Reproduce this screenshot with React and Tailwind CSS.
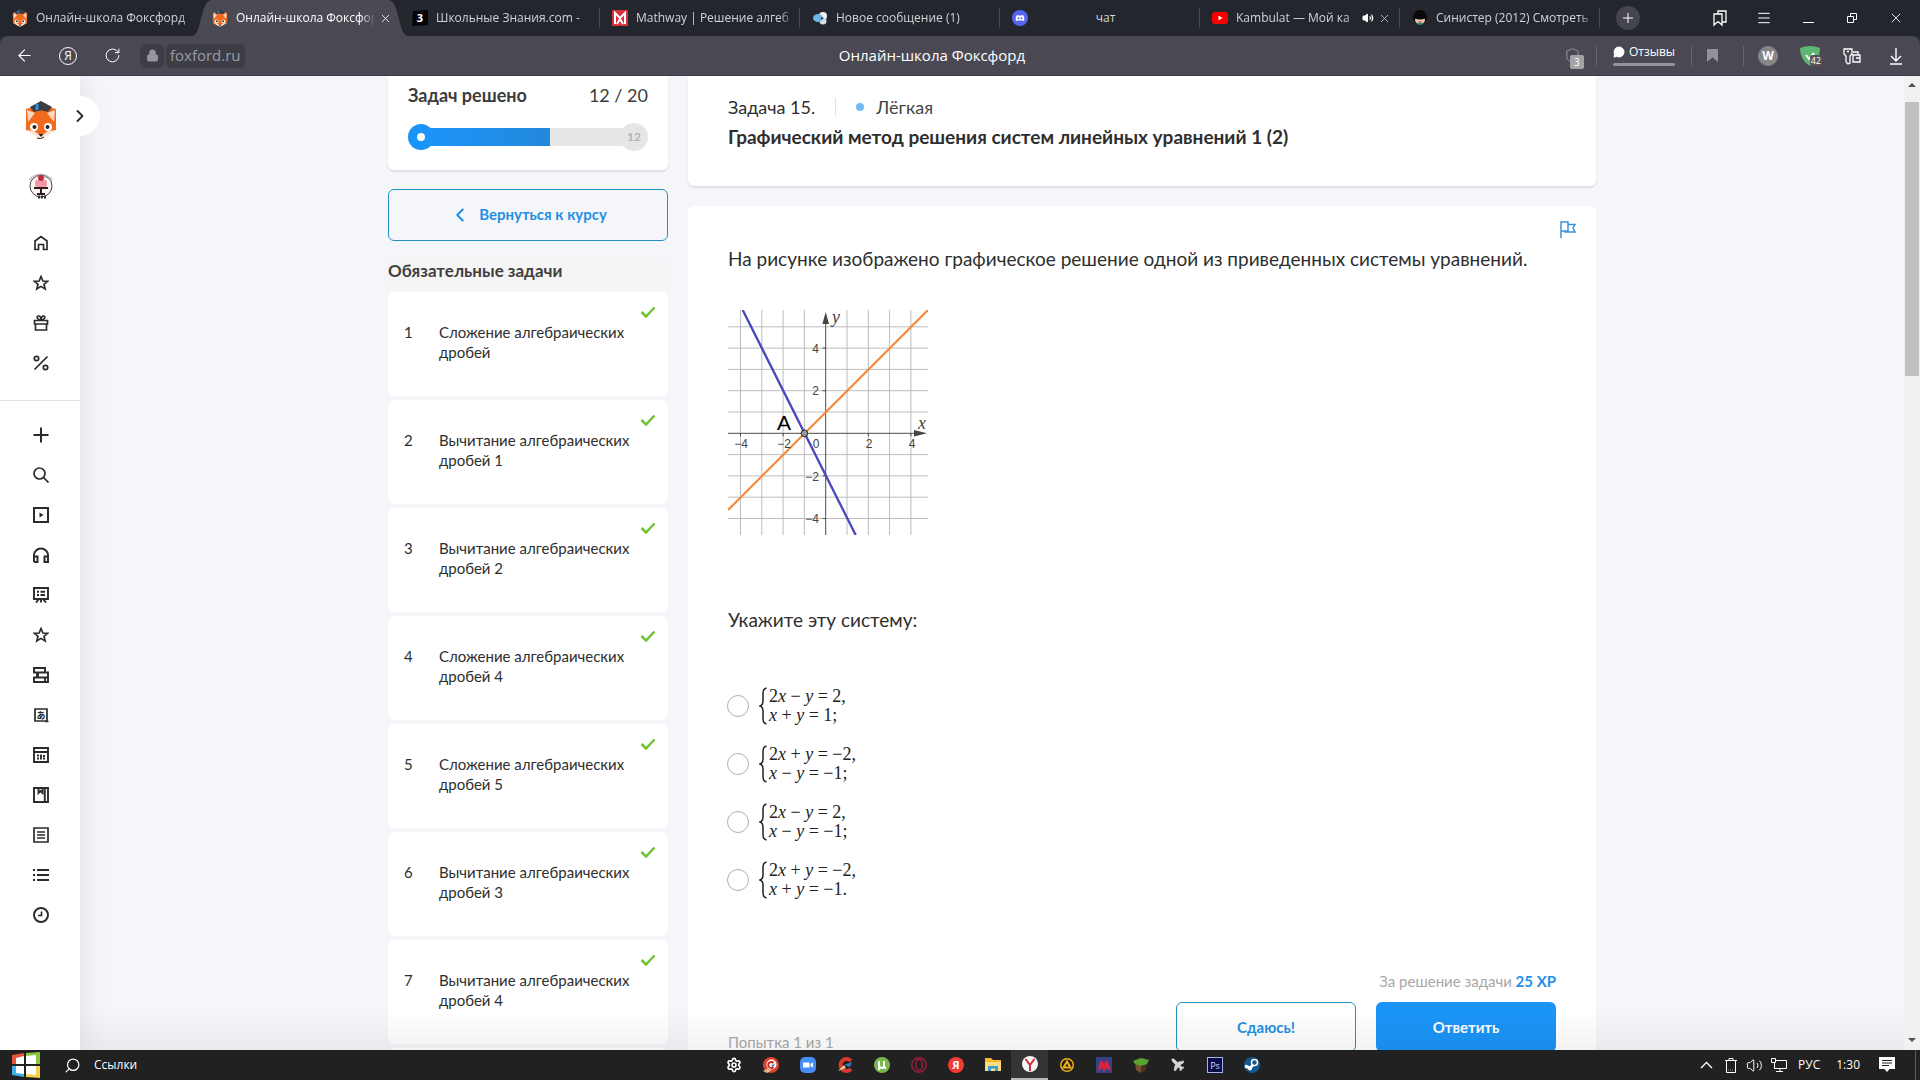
import React, { useState } from 'react';
import {
    ArrowLeft, RotateCw, Lock, X, Plus, Menu, Search, ChevronRight, ChevronLeft,
    ChevronUp, Volume2, Shield, MessageCircle, Settings, Plane
} from 'lucide-react';

const tasks = [
    'Сложение алгебраических дробей',
    'Вычитание алгебраических дробей 1',
    'Вычитание алгебраических дробей 2',
    'Сложение алгебраических дробей 4',
    'Сложение алгебраических дробей 5',
    'Вычитание алгебраических дробей 3',
    'Вычитание алгебраических дробей 4'
];

const answers = [
    [['2', 'x', ' − ', 'y', ' = 2,'], ['', 'x', ' + ', 'y', ' = 1;']],
    [['2', 'x', ' + ', 'y', ' = −2,'], ['', 'x', ' − ', 'y', ' = −1;']],
    [['2', 'x', ' − ', 'y', ' = 2,'], ['', 'x', ' − ', 'y', ' = −1;']],
    [['2', 'x', ' + ', 'y', ' = −2,'], ['', 'x', ' + ', 'y', ' = −1.']]
];

const Fox = ({ className }) => (
    <svg viewBox="0 0 32 38" className={className}>
        <path d="M1 8 L16 4 L31 8 V29 L16 37 L1 29 Z" fill="#f26a1e" />
        <path d="M2 9 L10 12 L3 21 Z M30 9 L22 12 L29 21 Z" fill="#fbd5bd" />
        <path d="M1 29 L9 30 L16 35 L23 30 L31 29 L16 38 Z" fill="#fbe6d8" />
        <path d="M5 6 L16 0 L27 6 L23 11 Q16 8 9 11 Z" fill="#3b3c44" />
        <path d="M12 3 V9" stroke="#2d8ee0" strokeWidth="3" />
        <circle cx="9" cy="26" r="4" fill="#fff" />
        <circle cx="23" cy="26" r="4" fill="#fff" />
        <circle cx="9.500" cy="26" r="2" fill="#28221f" />
        <circle cx="22.500" cy="26" r="2" fill="#28221f" />
        <path d="M13.500 33 H18.500 L16 36 Z" fill="#28221f" />
        <path d="M12 37 Q16 39 19 36" stroke="#28221f" fill="none" />
    </svg>
);

const Favicon = ({ kind }) => {
    if (kind === 'fox') return <Fox className="h-[18px] w-[18px] shrink-0" />;
    return (
        <svg viewBox="0 0 16 16" className="h-4 w-4 shrink-0">
            {kind === 'znania' && (
                <>
                    <path d="M1 1 L16 0 V15 L0 16 Z" fill="#050505" />
                    <text x="8" y="12" fontSize="11" fontWeight="700" textAnchor="middle" fill="#fff" fontFamily="Open Sans, sans-serif">3</text>
                </>
            )}
            {kind === 'mathway' && (
                <>
                    <rect width="16" height="16" fill="#d6303a" />
                    <path d="M3 14 V3 L8 8 L13 3 V14 M5 14 L8 9 L11 14" fill="none" stroke="#fff" strokeWidth="2" />
                </>
            )}
            {kind === 'message' && (
                <>
                    <circle cx="11" cy="6" r="4" fill="#f3f4f5" />
                    <circle cx="11" cy="11" r="3.500" fill="#d9dde0" />
                    <ellipse cx="6" cy="8" rx="5" ry="4" fill="#6eb4e4" />
                    <path d="M9 7 L12 8 L9 10 Z" fill="#2b4258" />
                </>
            )}
            {kind === 'discord' && (
                <>
                    <circle cx="8" cy="8" r="8" fill="#5865f2" />
                    <path d="M4 11 Q3 7 5 5 L7 5.500 H9 L11 5 Q13 7 12 11 L10 10.500 H6 Z" fill="#fff" />
                    <circle cx="6.500" cy="8.200" r="1" fill="#5865f2" />
                    <circle cx="9.500" cy="8.200" r="1" fill="#5865f2" />
                </>
            )}
            {kind === 'youtube' && (
                <>
                    <rect y="2" width="16" height="12" rx="3" fill="#f80000" />
                    <path d="M6.500 5.500 V10.500 L10.500 8 Z" fill="#fff" />
                </>
            )}
            {kind === 'film' && (
                <>
                    <circle cx="8" cy="7" r="7" fill="#0b0909" />
                    <ellipse cx="8" cy="10" rx="5" ry="4" fill="#ecc8b4" />
                    <path d="M2 8 Q8 11 14 8 L12 4 H4 Z" fill="#0b0909" />
                    <path d="M4 13 Q8 17 12 13 Z" fill="#2b8c7c" />
                    <path d="M6.500 12 H9.500" stroke="#b02222" />
                </>
            )}
        </svg>
    );
};

const Tab = ({ kind, title, active, closable, sound, center, divider }) => (
    <div className={`relative flex h-9 w-[200px] items-center pl-3 text-xs ${active ? 'text-white' : 'text-[#d2d2d6]'}`}>
        {active && (
            <svg viewBox="0 0 216 36" preserveAspectRatio="none" className="absolute top-0 -left-2 h-9 w-[216px]">
                <path d="M0 36 C10 36 8 0 20 0 H196 C208 0 206 36 216 36 Z" fill="#4b4a54" />
            </svg>
        )}
        <span className="relative mr-2 flex w-4 justify-center"><Favicon kind={kind} /></span>
        <span className={`relative mr-1 min-w-0 flex-1 overflow-hidden whitespace-nowrap ${center ? 'pr-5 text-center' : 'mask-r-from-90%'}`}>{title}</span>
        {sound && <Volume2 size={12} className="mr-1 shrink-0 fill-white text-white" />}
        {closable && (
            <button aria-label="Закрыть вкладку" className="relative mr-2 shrink-0"><X size={13} strokeWidth={1.5} /></button>
        )}
        {divider && <span className="h-5 w-px shrink-0 bg-[#484a52]" />}
    </div>
);

const BrowserTop = () => (
    <header className="shrink-0 bg-[#24262e] font-['Open_Sans','Noto_Sans',sans-serif] text-white">
        <div className="flex h-9 items-center">
            <Tab kind="fox" title="Онлайн-школа Фоксфорд" />
            <Tab kind="fox" title="Онлайн-школа Фоксфорд" active closable />
            <Tab kind="znania" title="Школьные Знания.com -" divider />
            <Tab kind="mathway" title="Mathway | Решение алгеб" divider />
            <Tab kind="message" title="Новое сообщение (1)" divider />
            <Tab kind="discord" title="чат" center divider />
            <Tab kind="youtube" title="Kambulat — Мой ка" sound closable divider />
            <Tab kind="film" title="Синистер (2012) Смотреть" divider />
            <button aria-label="Новая вкладка" className="ml-4 flex h-6 w-6 items-center justify-center rounded-full bg-[#44454e]">
                <Plus size={16} strokeWidth={1.5} />
            </button>
            <div className="ml-auto flex items-center pr-[2px]">
                <button aria-label="Закладки" className="flex w-11 justify-center">
                    <svg width="16" height="18" viewBox="0 0 16 18" fill="none" stroke="currentColor" strokeWidth="1.300">
                        <path d="M2 5 H10 V16 L6 12.500 L2 16 Z M6 5 V2 H14 V13 H10" />
                    </svg>
                </button>
                <button aria-label="Меню" className="flex w-11 justify-center"><Menu size={16} strokeWidth={1.5} /></button>
                <button aria-label="Свернуть" className="flex w-11 justify-center pt-2"><span className="h-px w-[11px] bg-white" /></button>
                <button aria-label="Окно" className="flex w-11 justify-center">
                    <svg width="12" height="12" viewBox="0 0 12 12" fill="none" stroke="currentColor">
                        <path d="M1.500 4.500 H7.500 V10.500 H1.500 Z M4.500 4.500 V1.500 H10.500 V7.500 H7.500" />
                    </svg>
                </button>
                <button aria-label="Закрыть" className="flex w-11 justify-center"><X size={16} strokeWidth={1.3} /></button>
            </div>
        </div>

        <div className="flex h-10 items-center rounded-t-lg border-b border-[#3c3b43] bg-[#4a4953]">
            <div className="flex flex-1 items-center pl-[2px]">
                <button aria-label="Назад" className="flex w-11 justify-center"><ArrowLeft size={19} strokeWidth={1.4} /></button>
                <button aria-label="Яндекс" className="flex w-11 justify-center">
                    <span className="flex h-[18px] w-[18px] items-center justify-center rounded-full border border-white text-xs leading-3">Я</span>
                </button>
                <button aria-label="Обновить" className="flex w-11 justify-center"><RotateCw size={17} strokeWidth={1.4} /></button>
                <span className="ml-[6px] flex h-6 w-6 items-center justify-center rounded-md bg-[#3d3d46]">
                    <Lock size={13} className="fill-[#96979e] text-[#96979e]" />
                </span>
                <span className="ml-[2px] flex h-6 items-center rounded-md bg-[#3d3d46] px-1 text-[15px] text-[#9c9ca3]">foxford.ru</span>
            </div>
            <h1 className="mr-[42px] text-[15px]">Онлайн-школа Фоксфорд</h1>
            <div className="flex flex-1 items-center justify-end pr-4">
                <span className="relative mr-3 flex w-5">
                    <Shield size={17} strokeWidth={1.3} className="text-[#a0a0a6]" />
                    <span className="absolute top-2 left-1.5 h-[14px] w-[14px] rounded-xs bg-[#a3a3a8] text-center text-[10px] leading-[14px]">3</span>
                </span>
                <span className="h-5 w-px bg-[#64646c]" />
                <button className="mx-4 flex flex-col gap-1 text-xs leading-[14px]">
                    <span className="flex items-center gap-1"><MessageCircle size={12} className="fill-white" />Отзывы</span>
                    <span className="h-[3px] w-full rounded bg-[#94949a]" />
                </button>
                <span className="h-5 w-px bg-[#64646c]" />
                <svg width="11" height="13" viewBox="0 0 11 13" className="mr-[25px] ml-[15px]"><path d="M0 0 H11 V13 L5.500 8.500 L0 13 Z" fill="#92929a" /></svg>
                <span className="mr-[14px] h-5 w-px bg-[#64646c]" />
                <span className="h-5 w-5 rounded-full bg-[#858588] text-center text-xs leading-5 font-bold">W</span>
                <span className="relative ml-[22px] h-5 w-[22px]">
                    <svg viewBox="0 0 20 20" className="h-5 w-5"><path d="M0 2 Q10 -2 20 2 Q20 14 10 20 Q0 14 0 2" fill="#5fb573" /><path d="M6 9 L9 13 L14 7" stroke="#fff" strokeWidth="2" fill="none" /></svg>
                    <span className="absolute right-0 bottom-0 rounded-xs bg-[#5b5157] px-px text-[9px] leading-[11px]">42</span>
                </span>
                <svg width="20" height="18" viewBox="0 0 20 18" fill="none" stroke="currentColor" strokeWidth="1.300" className="ml-5">
                    <path d="M2 2 H10 V7 L8 9 V16 L6 17 L4 15 V9 L2 7 Z M5 4.500 H7 M11 5 H16 V8 M11 8 H18 V15 H11 Z M14 11 H18" />
                </svg>
                <svg width="16" height="18" viewBox="0 0 16 18" fill="none" stroke="currentColor" strokeWidth="1.400" className="ml-[26px]">
                    <path d="M8 1 V14 M3 9 L8 14 L13 9 M2 17 H14" />
                </svg>
            </div>
        </div>
    </header>
);

const menuIcons = {
    home: <path d="M2 14.500 V6 L8 1.500 L14 6 V14.500 H10.500 V9.500 H5.500 V14.500 Z" />,
    star: <path d="M8 1.500 L9.900 6 L14.500 6.300 L11 9.300 L12.200 14 L8 11.400 L3.800 14 L5 9.300 L1.500 6.300 L6.100 6 Z" />,
    gift: <path d="M1.500 5.500 H14.500 V9 H1.500 Z M2.500 9 V15 H13.500 V9 M8 5 C4 5 3 1 5.500 1 C7 1 8 3 8 5 C8 3 9 1 10.500 1 C13 1 12 5 8 5" />,
    percent: <><path d="M1.500 14.500 L14.500 1.500" /><circle cx="3.500" cy="3.500" r="2.200" /><circle cx="12.500" cy="12.500" r="2.200" /></>,
    plus: <path d="M8 0.500 V15.500 M0.500 8 H15.500" strokeWidth="2" />,
    search: <><circle cx="6.500" cy="6.500" r="5.500" /><path d="M10.500 10.500 L15.500 15.500" /></>,
    video: <><rect x="1" y="1" width="14" height="14" strokeWidth="2" /><path d="M6.500 5.500 V10.500 L10.500 8 Z" fill="currentColor" stroke="none" /></>,
    headphones: <path d="M1 15 V8 A7 6.500 0 0 1 15 8 V15 H11.500 V9.500 H15 M1 15 H4.500 V9.500 H1" strokeWidth="2" />,
    board: <path d="M1 1 H15 V12 H1 Z M4 4.800 H6 M7.500 4.800 H12 M4 8 H6 M7.500 8 H12 M8 12 V15.500 M6 12 L3 15.500 M10 12 L13 15.500" strokeWidth="1.900" />,
    books: <path d="M1 1 H12 V5.500 H1 Z M4 5.500 H15 V10.500 H4 Z M1 10.500 H15 V15 H1 Z M5 5.500 V10 M12 11 V15" strokeWidth="1.900" />,
    lang: <><path d="M2 2 H14 V14 H2 Z M12 14.500 H15.500" /><text x="8" y="11.500" fontSize="9" fontWeight="700" textAnchor="middle" fill="currentColor" stroke="none" fontFamily="Noto Sans CJK JP, sans-serif">あ</text></>,
    calendar: <path d="M1 1 H15 V15 H1 Z M1 5 H15 M4 8.500 H6 M8 7.500 V12.500 M10 9 H12 M4 11.500 H6 M10 11.500 H12" strokeWidth="1.900" />,
    book: <path d="M1 1 H15 V15 H1 Z M11.800 1 V15 M5.500 1 V6 L7.500 4 L9.500 6 V1" strokeWidth="1.900" />,
    list: <path d="M1 1 H15 V15 H1 Z M4 5 H12 M4 8 H12 M4 11 H12" />,
    bullets: <path d="M0 3 H2 M4 3 H16 M0 8 H2 M4 8 H16 M0 13 H2 M4 13 H16" strokeWidth="2" />,
    clock: <><circle cx="8" cy="8" r="7" strokeWidth="2" /><path d="M8.500 4.500 V8.500 H5" /></>
};

const MenuLink = ({ name }) => (
    <a href="#" aria-label={name} className="flex h-10 w-full items-center justify-center pl-[2px]">
        <svg viewBox="0 0 16 16" width="16" height="16" fill="none" stroke="currentColor" strokeWidth="1.700">{menuIcons[name]}</svg>
    </a>
);

const Sidebar = () => (
    <nav className="relative z-10 w-20 shrink-0 bg-white text-[#2b2b2b] shadow-[4px_0_24px_rgba(60,70,90,0.10)]">
        <button aria-label="Развернуть меню" className="absolute top-5 left-[60px] flex h-10 w-10 items-center justify-center rounded-full bg-white">
            <ChevronRight size={20} strokeWidth={2.2} />
        </button>
        <a href="#" aria-label="Фоксфорд" className="relative flex justify-center pt-[25px] pl-[2px]"><Fox className="h-[38px] w-8" /></a>
        <a href="#" aria-label="Профиль" className="mt-[33px] mb-[23px] flex justify-center pl-[2px]">
            <svg viewBox="0 0 28 28" className="h-7 w-7">
                <circle cx="14" cy="14" r="11" fill="#fcf4f5" stroke="#474044" />
                <path d="M3 8 Q13 -2 25 8" stroke="#9a9a9a" strokeWidth="3" strokeDasharray="1 1" fill="none" />
                <rect x="8" y="8" width="12" height="7" rx="2" fill="#ef9ba6" />
                <circle cx="14" cy="6" r="3" fill="#c92a3c" />
                <path d="M7 16 H21 M14 16 V22 M10 22 H18" stroke="#351a20" strokeWidth="2" />
                <path d="M11 25 H20" stroke="#333" strokeWidth="3" strokeDasharray="2 1" />
            </svg>
        </a>
        {['home', 'star', 'gift', 'percent'].map(name => <MenuLink key={name} name={name} />)}
        <div className="mt-[17px] mb-[14px] border-t border-[#e0e1e6]" />
        {['plus', 'search', 'video', 'headphones', 'board', 'star', 'books', 'lang', 'calendar', 'book', 'list', 'bullets', 'clock'].map(name => (
            <MenuLink key={name} name={name} />
        ))}
    </nav>
);

const TaskColumn = () => (
    <aside className="w-[280px] shrink-0">
        <section className="h-[94px] rounded-b-md bg-white px-5 pt-1 shadow-[0_2px_2px_rgba(40,50,80,0.12)]">
            <div className="flex items-center justify-between text-lg leading-[30px] text-[#3c3c3c]">
                <h2 className="font-bold">Задач решено</h2>
                <span>12 / 20</span>
            </div>
            <div className="mt-[13px] flex items-center">
                <span className="z-10 flex h-[26px] w-[26px] items-center justify-center rounded-full bg-[#1a94f6]">
                    <span className="h-2 w-2 rounded-full bg-white" />
                </span>
                <span className="-mx-1 h-[18px] flex-1 bg-[#e6e6e6]">
                    <span className="block h-full w-[62%] bg-linear-to-r from-[#1a94f8] to-[#2488dc]" />
                </span>
                <span className="h-7 w-7 rounded-full bg-[#e6e6e6] text-center text-xs leading-7 font-bold text-[#b3b3b3]">12</span>
            </div>
        </section>
        <button className="mt-[19px] flex h-[52px] w-full items-center justify-center gap-2 rounded-md border border-[#2292c4] pb-px text-[15px] font-bold text-[#1f8fe6]">
            <ChevronLeft size={22} strokeWidth={2.2} />
            Вернуться к курсу
        </button>
        <h3 className="mt-[19px] mb-0.5 h-[30px] bg-[#f5f5f6] text-[17px] leading-[22px] font-bold text-[#3f3f3f]">Обязательные задачи</h3>
        <ol className="flex flex-col gap-1">
            {tasks.map((task, i) => (
                <li key={task} className="relative h-[104px] shrink-0 rounded-md bg-white">
                    <a href="#" className="flex pt-[30px] pl-4 text-[15px] leading-5 text-[#2e2e2e]">
                        <span className="w-[35px] shrink-0">{i + 1}</span>
                        <span className="w-[200px]">{task}</span>
                    </a>
                    <svg viewBox="0 0 16 12" className="absolute top-[14px] right-3 h-3 w-4"><path d="M1.500 6 L6 10.500 L14.500 1.500" fill="none" stroke="#6fc22f" strokeWidth="2.500" /></svg>
                </li>
            ))}
            <li className="h-[104px] shrink-0 rounded-md bg-white" />
        </ol>
    </aside>
);

// Origin and size of one unit, in svg pixels
const ORIGIN = { x: 97.7, y: 123.3 };
const UNIT = 21.3;
const gx = n => ORIGIN.x + n * UNIT;
const gy = n => ORIGIN.y - n * UNIT;

const Graph = () => (
    <svg viewBox="0 0 200 225" className="h-[225px] w-[200px]" fontFamily="Liberation Sans, sans-serif" fontSize="12" fill="#454545">
        <g stroke="#bdbdbd">
            {[-4, -3, -2, -1, 1, 2, 3, 4].map(n => <line key={n} x1={gx(n)} x2={gx(n)} y1="0" y2="225" />)}
            {[-4, -3, -2, -1, 1, 2, 3, 4, 5].map(n => <line key={n} x1="0" x2="200" y1={gy(n)} y2={gy(n)} />)}
        </g>
        <g stroke="#4a4a4a">
            <line x1={gx(0)} x2={gx(0)} y1="5" y2="225" />
            <line x1="0" x2="195" y1={gy(0)} y2={gy(0)} />
            {[-4, -2, 2, 4].map(n => <path key={n} d={`M${gx(n)} ${gy(0)} v3 M${gx(0)} ${gy(n)} h-3`} />)}
        </g>
        <path d="M97.700 2 L101 14 H94.400 Z M199 123.300 L186 120 V126.600 Z" />
        <line x1="0" y1="200" x2="200" y2="0" stroke="#f5883f" strokeWidth="2.200" />
        <line x1="14.700" y1="0" x2="127.700" y2="225" stroke="#4a46bb" strokeWidth="2.300" />
        <circle cx={gx(-1)} cy={gy(0)} r="3.300" fill="#999" stroke="#222" />
        <g textAnchor="middle">
            <text x="13" y="138">−4</text>
            <text x="56" y="138">−2</text>
            <text x="88" y="138">0</text>
            <text x="141" y="138">2</text>
            <text x="184" y="138">4</text>
        </g>
        <g textAnchor="end">
            <text x="91" y="43">4</text>
            <text x="91" y="85">2</text>
            <text x="91" y="171">−2</text>
            <text x="91" y="213">−4</text>
        </g>
        <text x="49" y="120" fontSize="21" fill="#000">A</text>
        <g fontFamily="Liberation Serif, serif" fontStyle="italic" fontSize="18">
            <text x="104" y="13">y</text>
            <text x="190" y="119">x</text>
        </g>
    </svg>
);

const Equation = ({ parts }) => (
    <span className="block whitespace-pre">
        {parts[0]}<i>{parts[1]}</i>{parts[2]}<i>{parts[3]}</i>{parts[4]}
    </span>
);

const Problem = () => {
    const [answer, setAnswer] = useState(null);

    return (
        <main className="min-w-0 flex-1 text-[#2e2e2e]">
            <section className="h-[110px] rounded-b-md bg-white px-10 pt-4 shadow-[0_2px_2px_rgba(40,50,80,0.12)]">
                <div className="flex items-center text-lg leading-[30px]">
                    <span>Задача 15.</span>
                    <span className="mx-5 h-[18px] w-px bg-[#e2e2e2]" />
                    <span className="mr-3 h-2 w-2 rounded-full bg-[#74b8f0]" />
                    <span className="text-[#444]">Лёгкая</span>
                </div>
                <h2 className="text-[19px] leading-[30px] font-bold">Графический метод решения систем линейных уравнений 1 (2)</h2>
            </section>

            <section className="mt-5 rounded-t-md bg-white px-10 pt-[14px] pb-8">
                <div className="-mr-5 flex h-[18px] justify-end">
                    <button aria-label="Пожаловаться" className="text-[#3a94e0]">
                        <svg width="16" height="18" viewBox="0 0 16 18" fill="none" stroke="currentColor" strokeWidth="1.500"><path d="M1 18 V2 H8 V11 H1 M8 4.500 H15 L13 8 L15 12 H5 V11" /></svg>
                    </button>
                </div>
                <p className="mt-[6px] text-[19px] leading-[30px]">На рисунке изображено графическое решение одной из приведенных системы уравнений.</p>
                <div className="mt-9"><Graph /></div>
                <p className="mt-[70px] text-[19px] leading-[30px]">Укажите эту систему:</p>
                <fieldset className="mt-[42px]">
                    {answers.map((lines, i) => (
                        <label key={i} className="flex h-[58px] items-center gap-[10px] font-['Liberation_Serif',serif] text-lg leading-[19px] text-[#222]">
                            <input
                                type="radio"
                                name="answer"
                                checked={answer === i}
                                onChange={() => setAnswer(i)}
                                className="-ml-px h-[22px] w-[22px] appearance-none rounded-full border border-[#b0b0b0] bg-white checked:border-[7px] checked:border-[#1a94f6]"
                            />
                            <span className="flex items-center gap-[2px]">
                                <svg viewBox="0 0 8 38" className="h-[38px] w-2" fill="none" stroke="currentColor" strokeWidth="1.500"><path d="M7.500 1 Q4 2 4 6 V14 Q4 18 1 19 Q4 20 4 24 V32 Q4 36 7.500 37" /></svg>
                                <span>{lines.map((parts, n) => <Equation key={n} parts={parts} />)}</span>
                            </span>
                        </label>
                    ))}
                </fieldset>
                <p className="mt-[62px] text-right text-[15px] leading-5 text-[#a8a8a8]">
                    За решение задачи <b className="text-[#1f8fe6]">25 XP</b>
                </p>
                <div className="mt-[11px] flex items-start gap-5 text-[15px] font-bold">
                    <span className="mt-[30px] mr-auto leading-5 font-normal text-[#a8a8a8]">Попытка 1 из 1</span>
                    <button className="h-[50px] w-[180px] rounded-md border border-[#2292c4] text-[#1f8fe6]">Сдаюсь!</button>
                    <button className="h-[50px] w-[180px] rounded-md bg-[#1a94f6] text-white">Ответить</button>
                </div>
            </section>
        </main>
    );
};

const Scrollbar = () => (
    <div className="flex w-4 shrink-0 flex-col items-center bg-[#f1f1f1]">
        <svg viewBox="0 0 16 16" className="mt-0.5 h-4 w-4 fill-[#505050]"><path d="M4 9 L8 5 L12 9 Z" /></svg>
        <div className="mt-2 h-[274px] w-[14px] bg-[#c1c1c1]" />
        <svg viewBox="0 0 16 16" className="mt-auto mb-0.5 h-4 w-4 fill-[#505050]"><path d="M4 6 L8 10 L12 6 Z" /></svg>
    </div>
);

const appIcons = {
    settings: <Settings size={16} strokeWidth={2.5} />,
    ccleanerBrowser: <svg viewBox="0 0 16 16"><circle cx="8" cy="8" r="8" fill="#d9402c" /><circle cx="8.500" cy="7.500" r="5" fill="#fff" /><path d="M10.500 6 A3 3 0 1 0 10.500 10" stroke="#c5281c" strokeWidth="2" fill="none" /><path d="M8 8 L12 7 L10 10 Z" fill="#3977b8" /><path d="M0 14 L7 10 L8 14 L4 16 Z" fill="#e8b090" /></svg>,
    zoom: <svg viewBox="0 0 16 16"><rect width="16" height="16" rx="5" fill="#468df6" /><path d="M3 5.500 H9.500 V10.500 H3 Z M10.500 7 L13 5.500 V10.500 L10.500 9 Z" fill="#fff" /></svg>,
    ccleaner: <svg viewBox="0 0 16 16"><path d="M14 4 A6 6 0 1 0 14 12" stroke="#d8392b" strokeWidth="4" fill="none" /><path d="M7 8 L15 5 L13 10 Z" fill="#3977b8" /><path d="M1 14 L7 8 L9 11 Z" fill="#e9c9a0" /></svg>,
    utorrent: <svg viewBox="0 0 16 16"><circle cx="8" cy="8" r="8" fill="#79b84a" /><path d="M5 13 V4 V8 Q5 11 8 11 Q10 11 10 8 V4 V9 Q10 11 12 11" stroke="#fff" strokeWidth="2" fill="none" /></svg>,
    opera: <svg viewBox="0 0 16 16" fill="none" stroke="#9b1f3b" strokeWidth="1.500"><circle cx="8" cy="8" r="7.200" /><ellipse cx="8" cy="8" rx="3.300" ry="5.500" /></svg>,
    yandex: <svg viewBox="0 0 16 16"><circle cx="8" cy="8" r="8" fill="#f43a36" /><text x="8" y="12" fontSize="11" fontWeight="700" textAnchor="middle" fill="#fff" fontFamily="Open Sans, sans-serif">Я</text></svg>,
    explorer: <svg viewBox="0 0 16 16"><path d="M0 1 H6 L8 3 H16 V14 H0 Z" fill="#f4b92e" /><path d="M0 5 H16 V14 H0 Z" fill="#fcdc80" /><path d="M3 14 V9 H13 V14 H10 V11.500 H6 V14 Z" fill="#3b9bd7" /></svg>,
    browser: <svg viewBox="0 0 16 16"><circle cx="8" cy="8" r="8" fill="#f6f4f4" /><path d="M3.500 3 L8 9 V15 M12.500 3 L8 9" stroke="#cf2e35" strokeWidth="2" fill="none" /></svg>,
    aimp: <svg viewBox="0 0 16 16"><circle cx="8" cy="8" r="7" fill="#e8b01c" /><circle cx="8" cy="8" r="5.500" fill="#231d10" /><path d="M8 4.500 L11.500 10.500 H4.500 Z" stroke="#e8b01c" strokeWidth="2" fill="none" /></svg>,
    game: <svg viewBox="0 0 16 16"><rect width="16" height="16" fill="#33418b" /><path d="M2 14 L3 7 L6 2 L7 6 H9 L10 2 L13 7 L15 14 L10 11 L8 15 L6 11 Z" fill="#d9243d" /></svg>,
    minecraft: <svg viewBox="0 0 16 16"><path d="M2 5 L8 8 V16 L3 13 Z" fill="#76502f" /><path d="M14 5 L8 8 V16 L13 13 Z" fill="#4c3221" /><path d="M0 4 L8 1 L16 3 L14 7 L8 9 L2 7 Z" fill="#58a42f" /></svg>,
    plane: <Plane size={16} className="-rotate-90 fill-[#d5d5d5] text-[#d5d5d5]" strokeWidth={1} />,
    photoshop: <svg viewBox="0 0 16 16"><rect x="0.500" y="0.500" width="15" height="15" fill="#0a0d45" stroke="#9fb4ee" /><text x="8" y="11.500" fontSize="9" textAnchor="middle" fill="#d5dcff" fontFamily="Open Sans, sans-serif">Ps</text></svg>,
    steam: <svg viewBox="0 0 16 16"><circle cx="8" cy="8" r="8" fill="#14568d" /><circle cx="10.500" cy="5.500" r="3" fill="none" stroke="#fff" strokeWidth="1.500" /><path d="M1 9 L6 11 L9 8" stroke="#fff" strokeWidth="3" fill="none" /><circle cx="6" cy="11.500" r="2" fill="#fff" /></svg>
};

const Taskbar = () => (
    <footer className="flex h-[30px] shrink-0 items-center bg-[#212121] font-['Open_Sans','Noto_Sans',sans-serif] text-xs text-white">
        <div className="flex w-[715px] shrink items-center">
            <button aria-label="Пуск" className="ml-3 h-[26px] w-7">
                <svg viewBox="0 0 28 26">
                    <path d="M0 3 L12 1 V12 H0 Z" fill="#e5533c" />
                    <path d="M14 1 L28 0 V12 H14 Z" fill="#8ac640" />
                    <path d="M0 14 H12 V25 L0 23 Z" fill="#3cb4e8" />
                    <path d="M14 14 H28 V26 L14 25 Z" fill="#f6d34a" />
                    <path d="M4 6 L12 4 V12 H4 Z M14 4 L24 3 V12 H14 Z M4 14 H12 V22 L4 21 Z M14 14 H24 V23 L14 22 Z" fill="#fff" />
                </svg>
            </button>
            <button aria-label="Поиск" className="ml-6"><Search size={17} strokeWidth={1.7} className="-scale-x-100" /></button>
            <a href="#" className="ml-[13px]">Ссылки</a>
        </div>
        {Object.keys(appIcons).map(name => (
            <button
                key={name}
                aria-label={name}
                className={`flex h-full w-[37px] items-center justify-center [&>svg]:h-4 [&>svg]:w-4 ${name === 'browser' ? 'border-b-2 border-[#b9b9b9] bg-[#343434]' : ''}`}
            >
                {appIcons[name]}
            </button>
        ))}
        <div className="ml-auto flex h-full items-center">
            <svg width="13" height="8" viewBox="0 0 13 8" fill="none" stroke="currentColor" strokeWidth="1.300" className="mr-3"><path d="M1 7 L6.500 1.500 L12 7" /></svg>
            <svg width="12" height="15" viewBox="0 0 12 15" fill="none" stroke="currentColor" className="mr-[9px]"><path d="M0 2.500 H12 M4 2 V0.500 H8 V2 M1.500 3 V14.500 H10.500 V3" /><path d="M3 12 H9" stroke="#7da590" strokeDasharray="1 1" /></svg>
            <Volume2 size={17} strokeWidth={1.4} className="mr-2" />
            <svg width="16" height="14" viewBox="0 0 16 14" fill="none" stroke="currentColor" className="mr-[11px]"><path d="M5 2.500 H15.500 V10.500 H3.500 V5 M0.500 0.500 H4.500 V4.500 H0.500 Z M9 10.500 V13 M5 13.500 H12" /></svg>
            <span className="mr-4">РУС</span>
            <time className="mr-[19px]">1:30</time>
            <svg width="16" height="16" viewBox="0 0 16 16" className="mr-5"><path d="M0 0 H16 V12 H10.500 L8 15 L5.500 12 H0 Z" fill="#fff" /><path d="M3 3.500 H13 M3 6 H13 M3 8.500 H10" stroke="#212121" /></svg>
            <span className="mr-1 h-full w-px bg-[#5c5c5c]" />
        </div>
    </footer>
);

const App = () => (
    <div className="flex h-screen flex-col overflow-hidden font-['Lato','Open_Sans',sans-serif]">
        <BrowserTop />
        <div className="flex min-h-0 flex-1 overflow-hidden bg-[#f5f6fa]">
            <Sidebar />
            <div className="relative min-w-0 flex-1 overflow-hidden">
                <div className="mx-auto flex max-w-[1208px] items-start gap-5">
                    <TaskColumn />
                    <Problem />
                </div>
                <div className="pointer-events-none absolute inset-x-0 bottom-0 h-10 bg-linear-to-b from-transparent to-black/5" />
            </div>
            <Scrollbar />
        </div>
        <Taskbar />
    </div>
);

export default App;
